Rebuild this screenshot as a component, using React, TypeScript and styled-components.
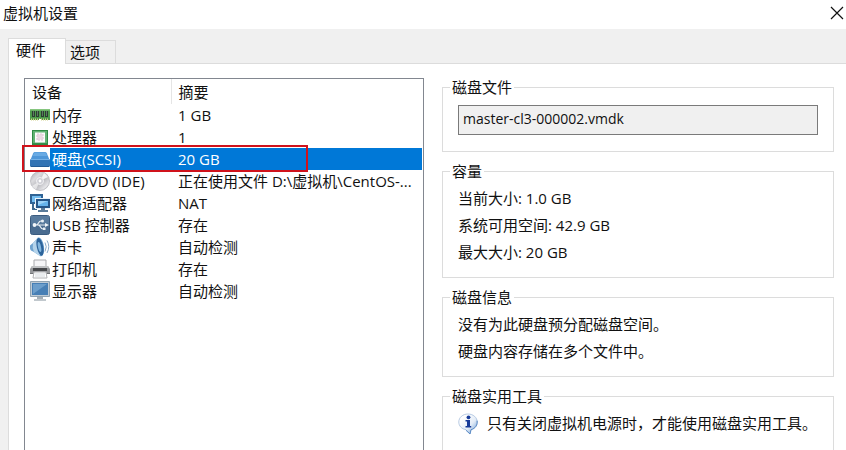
import React from "react";
import styled, { createGlobalStyle } from "styled-components";

const GlobalStyle = createGlobalStyle`
  * { box-sizing: border-box; }
  body { margin: 0; background: #f0f0f0; overflow: hidden; }
  body, button, input {
    font-family: "Open Sans", "Noto Sans CJK SC", sans-serif;
    font-size: 15px;
    line-height: 20px;
    color: #111;
  }
`;

const Dialog = styled.main`
  display: flex;
  flex-direction: column;
  min-height: 100vh;
`;

const TitleBar = styled.header`
  display: flex;
  align-items: center;
  justify-content: space-between;
  height: 29px;
  padding: 0 2px 3px 3px;
  background: #fff;
`;

const Title = styled.h1`
  margin: 0;
  font-size: 15px;
  font-weight: 400;
`;

const CloseButton = styled.button`
  display: flex;
  padding: 0;
  border: 0;
  background: none;
`;

const TabStrip = styled.div`
  display: flex;
  align-items: flex-end;
  height: 34px;
  padding-left: 8px;
`;

const Tab = styled.button<{ $active?: boolean }>`
  position: relative;
  height: ${(p) => (p.$active ? 26 : 23)}px;
  margin-bottom: ${(p) => (p.$active ? -1 : 0)}px;
  padding: 0 ${(p) => (p.$active ? 19 : 15)}px ${(p) => (p.$active ? 3 : 0)}px
    ${(p) => (p.$active ? 7 : 4)}px;
  border: 1px solid #dcdcdc;
  border-bottom: 0;
  border-left-width: ${(p) => (p.$active ? 1 : 0)}px;
  background: ${(p) => (p.$active ? "#fff" : "#f0f0f0")};
`;

const TabPanel = styled.section`
  display: grid;
  flex: 1;
  grid-template-columns: minmax(0, 400fr) minmax(0, 392fr);
  column-gap: 18px;
  margin-left: 8px;
  padding: 14px 12px 0 15px;
  border: solid #dcdcdc;
  border-width: 1px 0 0 1px;
  background: #fff;
`;

const DeviceList = styled.div`
  padding-right: 1px;
  border: 1px solid #828790;
  border-bottom: 0;
`;

const DeviceTable = styled.table`
  width: 100%;
  table-layout: fixed;
  border-collapse: collapse;
`;

const IconColumn = styled.col`
  width: 25px;
`;

const NameColumn = styled.col`
  width: 121px;
`;

const HeadCell = styled.th`
  height: 25px;
  padding: 0 6px 0 7px;
  font-weight: 400;
  text-align: left;

  & + & {
    border-left: 1px solid #e5e5e5;
  }
`;

const DeviceRow = styled.tr<{ $selected?: boolean }>`
  height: 22px;
  color: ${(p) => (p.$selected ? "#fff" : "#111")};

  td + td {
    background: ${(p) => (p.$selected ? "#0078d7" : "transparent")};
  }
`;

const IconCell = styled.td`
  position: relative;
  padding: 0 0 0 5px;

  svg { display: block; }
`;

const NameCell = styled.td`
  padding: 0 0 0 2px;
  white-space: nowrap;
`;

const SummaryCell = styled.td`
  padding: 0 0 0 7px;
  overflow: hidden;
  white-space: nowrap;
`;

const Highlight = styled.span`
  position: absolute;
  z-index: 1;
  top: -3px;
  left: -3px;
  width: 286px;
  height: 27px;
  border: 2px solid #d0121b;
  pointer-events: none;
`;

const Details = styled.div`
  display: flex;
  flex-direction: column;
  gap: 10px;
`;

const Group = styled.fieldset<{ $open?: boolean }>`
  min-width: 0;
  flex: ${(p) => (p.$open ? "1" : "none")};
  margin: 0;
  padding: 5px 15px 11px;
  border: 1px solid #dcdcdc;
  border-bottom-width: ${(p) => (p.$open ? 0 : 1)}px;
`;

const FileGroup = styled(Group)`
  padding: 9px 15px 16px;
`;

const Legend = styled.legend`
  margin-left: -8px;
  padding: 0 2px;
  line-height: 18px;
`;

const FileField = styled.input`
  display: block;
  width: 100%;
  height: 30px;
  padding: 0 4px 4px;
  border: 1px solid #7a7a7a;
  border-radius: 0;
  background: #f0f0f0;
  font-size: 14px;
`;

const Line = styled.p`
  margin: 0;
  line-height: 27px;
  white-space: nowrap;
`;

const Notice = styled.div`
  display: flex;
  align-items: center;
  gap: 9px;
`;

const Icon = ({ children }: { children: React.ReactNode }) => (
  <svg width="20" height="20" viewBox="0 0 20 20" aria-hidden="true">
    {children}
  </svg>
);

const MemoryIcon = () => (
  <Icon>
    <path d="M0 4h20v11H0z" fill="#4c9a4a" />
    <path d="M0 4h20v1.500H0z" fill="#86c67f" />
    <path d="M2 6h3v6H2zM6 6h3v6H6zM11 6h3v6h-3zM15 6h3v6h-3z" fill="#2b3f30" />
    <path d="M3 6h1v5H3zM7 6h1v5H7zM12 6h1v5h-1zM16 6h1v5h-1z" fill="#5d7962" />
    <path d="M1 14.500h18" stroke="#cfcf86" strokeWidth="2" strokeDasharray="1 1" />
    <path d="M9 14h2v2H9z" fill="#fff" />
  </Icon>
);

const CpuIcon = () => (
  <Icon>
    <path d="M2 3h16v15H2z" fill="#2f8b45" />
    <path d="M3 4h14v13H3z" fill="#62b274" />
    <path d="M5 5.500h10v10H5z" fill="#fbfbfb" />
    <path d="M7 7h6v6H7z" fill="#efe3ea" stroke="#d5bccb" strokeWidth=".8" strokeDasharray="2 1" />
    <path d="M8 9h4M8 11h4" stroke="#dcc6d3" strokeWidth=".7" />
    <path d="M3 16h14v1H3z" fill="#368f4b" />
  </Icon>
);

const DiskIcon = () => (
  <Icon>
    <path d="M5 3h10q1.300 0 1.800 1.200L20 12H0l3.200-7.800Q3.700 3 5 3z" fill="#4f97d8" />
    <path d="M5.200 3.500h9.600q1 0 1.400 1L17 7H3l.8-2.500q.4-1 1.400-1z" fill="#69abe4" />
    <rect y="10" width="20" height="8" rx="1.500" fill="#3273b4" />
    <path d="M1 10.500h18" stroke="#74b1e6" />
    <path d="M1 17.500h18" stroke="#235b96" />
  </Icon>
);

const DiscIcon = () => (
  <Icon>
    <defs>
      <linearGradient id="disc" x1="0" y1="0" x2="1" y2="1">
        <stop offset="0" stopColor="#a5a5aa" />
        <stop offset=".3" stopColor="#dcdcdf" />
        <stop offset=".55" stopColor="#b9b9be" />
        <stop offset=".8" stopColor="#e6e6e9" />
        <stop offset="1" stopColor="#a2a2a8" />
      </linearGradient>
    </defs>
    <circle cx="10" cy="10" r="9.500" fill="url(#disc)" stroke="#b0b0b6" strokeWidth=".7" />
    <path d="M10 10 2 15a9 9 0 0 0 4 3.500z" fill="#fff" opacity=".6" />
    <path d="m10 10 4-8a9 9 0 0 1 4 4z" fill="#fff" opacity=".8" />
    <circle cx="10" cy="10" r="3.500" fill="#ceced4" stroke="#f2f2f4" />
    <circle cx="10" cy="10" r="1.400" fill="#fff" />
  </Icon>
);

const NetworkIcon = () => (
  <Icon>
    <path d="M0 1h13v10H0z" fill="#2f6395" />
    <path d="M2 3h9v6H2z" fill="#74bdf0" />
    <path d="M3 11v5h4" fill="none" stroke="#3e698f" strokeWidth="2" />
    <path d="M5 5h15v11H5z" fill="#e9f2f9" />
    <path d="M6 6h14v9H6z" fill="#245588" />
    <path d="M8 8h10v5H8z" fill="#64b3ec" />
    <path d="M8 8h10l-10 4z" fill="#9bd2f7" />
    <path d="M11 15h4v2h3v2H8v-2h3z" fill="#5a7c9b" />
  </Icon>
);

const UsbIcon = () => (
  <Icon>
    <rect x=".5" y=".5" width="19" height="19" rx="2" fill="#4a6c90" stroke="#3b5c80" />
    <path d="M1 1h18v8H1z" fill="#587b9e" />
    <path d="M4 10h12M6 10c3 0 2-4 5-4h1M8 10c3 0 2 4 5 4h1" fill="none" stroke="#e8eff5" strokeWidth="1.200" />
    <circle cx="4.500" cy="10" r="1.900" fill="#f2f6f9" />
    <path d="m15 8 4 2-4 2z" fill="#f2f6f9" />
    <circle cx="12.500" cy="6" r="1.500" fill="#e8eff5" />
    <path d="M13 12.500h2.500V15H13z" fill="#e8eff5" />
  </Icon>
);

const SoundIcon = () => (
  <Icon>
    <path d="M0 8.500 3 6l5-5.500q3-.5 5 5t.5 11Q12.500 20 10 19l-6-4-3-1.500q-1.500-2-1-5z" fill="#6fa3cf" />
    <path d="M3 6 8 .5q1 3 1 6l1 12.500-6-4q-2-4-1-9z" fill="#b4d3ea" />
    <ellipse cx="10" cy="9.800" rx="3.200" ry="9" transform="rotate(-12 10 9.800)" fill="#2d649b" />
    <ellipse cx="9.500" cy="10" rx="1.500" ry="5" transform="rotate(-12 9.500 10)" fill="#82b6de" />
    <path d="M15 5.500q2.500 4 0 9M17 3.500q3.500 6 0 12.500" fill="none" stroke="#8babc9" />
  </Icon>
);

const PrinterIcon = () => (
  <Icon>
    <path d="M4 1h12v7H4z" fill="#f5f5f7" stroke="#a9aaad" />
    <path d="M2 7h16l2 3v5H0v-5z" fill="#96989b" />
    <path d="M2 7h16l1 2H1z" fill="#bfc1c3" />
    <path d="M3 9h14v3H3z" fill="#45474a" />
    <path d="M0 14h20v1H0z" fill="#707376" />
    <path d="M4 13h12l1 6H3z" fill="#fff" stroke="#b0b1b4" />
    <path d="M5 15h10M5 17h10" stroke="#d4d9de" />
  </Icon>
);

const DisplayIcon = () => (
  <Icon>
    <path d="M.5.5h19v15H.5z" fill="#bfcbd5" stroke="#91a3b1" />
    <path d="M2 2h16v12H2z" fill="#477fb5" />
    <path d="M3 3h14L3 13z" fill="#6c9ecb" />
    <path d="M7 16h6v2H7z" fill="#a5afb7" />
    <path d="M4 18h12v2H4z" fill="#c1c8cd" />
  </Icon>
);

const InfoIcon = () => (
  <svg width="20" height="22" viewBox="0 0 20 22" aria-hidden="true">
    <defs>
      <linearGradient id="bubble" x1="0" y1="0" x2="1" y2="1">
        <stop offset=".2" stopColor="#fff" />
        <stop offset=".6" stopColor="#e3ecf7" />
        <stop offset="1" stopColor="#5e93cf" />
      </linearGradient>
    </defs>
    <path
      d="M10 1c5.200 0 9.200 3.500 9.200 8 0 3.800-2.600 6.800-6.200 7.700L12 21l-4-4.300C3.700 16 .8 13 .8 9 .8 4.500 4.800 1 10 1z"
      fill="url(#bubble)"
      stroke="#a4bddc"
      strokeWidth=".8"
    />
    <path d="M8 17.300 12 21l1-4.300c4.500-1.200 6.700-5 6.100-9" fill="none" stroke="#5c8cc6" />
    <circle cx="10.500" cy="4.300" r="1.900" fill="#173b99" />
    <path d="M7.500 7H12v6h1.200v1.500H7.500V13H9V8.500H7.500z" fill="#173b99" />
  </svg>
);

const devices = [
  { name: "内存", summary: "1 GB", Glyph: MemoryIcon },
  { name: "处理器", summary: "1", Glyph: CpuIcon },
  { name: "硬盘(SCSI)", summary: "20 GB", Glyph: DiskIcon, selected: true },
  { name: "CD/DVD (IDE)", summary: "正在使用文件 D:\\虚拟机\\CentOS-...", Glyph: DiscIcon },
  { name: "网络适配器", summary: "NAT", Glyph: NetworkIcon },
  { name: "USB 控制器", summary: "存在", Glyph: UsbIcon },
  { name: "声卡", summary: "自动检测", Glyph: SoundIcon },
  { name: "打印机", summary: "存在", Glyph: PrinterIcon },
  { name: "显示器", summary: "自动检测", Glyph: DisplayIcon },
];

export default function App() {
  return (
    <Dialog>
      <GlobalStyle />
      <TitleBar>
        <Title>虚拟机设置</Title>
        <CloseButton type="button" aria-label="关闭">
          <svg width="14" height="14" viewBox="0 0 14 14" aria-hidden="true">
            <path d="m1 1 12 12M13 1 1 13" stroke="#111" strokeWidth="1.200" />
          </svg>
        </CloseButton>
      </TitleBar>
      <TabStrip role="tablist">
        <Tab type="button" role="tab" aria-selected="true" $active>硬件</Tab>
        <Tab type="button" role="tab" aria-selected="false">选项</Tab>
      </TabStrip>
      <TabPanel role="tabpanel">
        <DeviceList>
          <DeviceTable>
            <colgroup>
              <IconColumn />
              <NameColumn />
              <col />
            </colgroup>
            <thead>
              <tr>
                <HeadCell colSpan={2} scope="col">设备</HeadCell>
                <HeadCell scope="col">摘要</HeadCell>
              </tr>
            </thead>
            <tbody>
              {devices.map(({ name, summary, Glyph, selected }) => (
                <DeviceRow key={name} $selected={selected} aria-selected={!!selected}>
                  <IconCell>
                    <Glyph />
                    {selected && <Highlight />}
                  </IconCell>
                  <NameCell>{name}</NameCell>
                  <SummaryCell>{summary}</SummaryCell>
                </DeviceRow>
              ))}
            </tbody>
          </DeviceTable>
        </DeviceList>
        <Details>
          <FileGroup>
            <Legend>磁盘文件</Legend>
            <FileField aria-label="磁盘文件" readOnly value="master-cl3-000002.vmdk" />
          </FileGroup>
          <Group>
            <Legend>容量</Legend>
            <Line>当前大小: 1.0 GB</Line>
            <Line>系统可用空间: 42.9 GB</Line>
            <Line>最大大小: 20 GB</Line>
          </Group>
          <Group>
            <Legend>磁盘信息</Legend>
            <Line>没有为此硬盘预分配磁盘空间。</Line>
            <Line>硬盘内容存储在多个文件中。</Line>
          </Group>
          <Group $open>
            <Legend>磁盘实用工具</Legend>
            <Notice>
              <InfoIcon />
              <Line>只有关闭虚拟机电源时，才能使用磁盘实用工具。</Line>
            </Notice>
          </Group>
        </Details>
      </TabPanel>
    </Dialog>
  );
}
